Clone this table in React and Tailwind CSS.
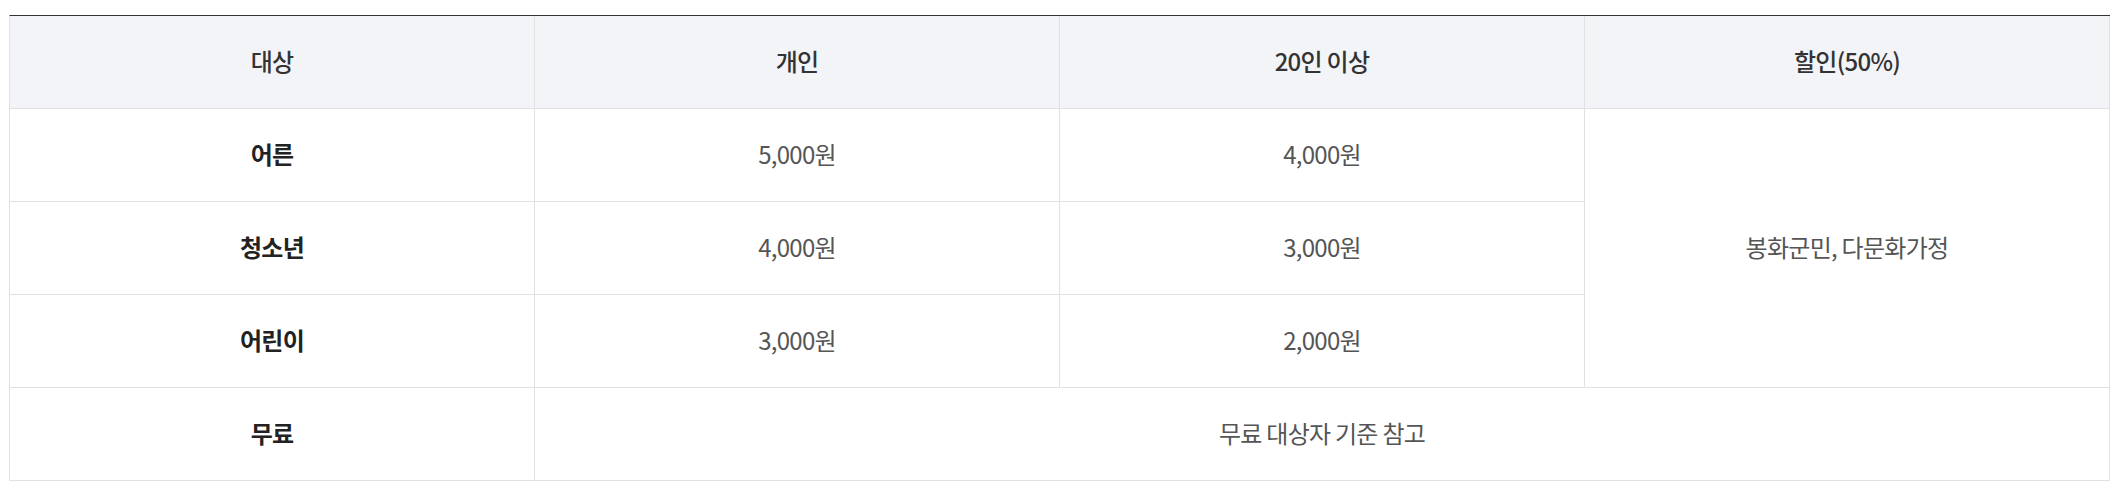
export default function App() {
  const font = { fontFamily: '"Noto Sans CJK KR", "Noto Sans", sans-serif' };
  const cell = "flex items-center justify-center border-r border-b border-[#e1e1e1] h-[93px] pb-[3px]";
  const head = `${cell} bg-[#f3f4f8] text-[#333] font-medium`;
  const label = `${cell} text-[#222] font-bold`;
  const val = `${cell} text-[#555]`;
  return (
    <div className="bg-white w-[2123px] h-[493px] pt-[15px] pl-[9px]" style={font}>
      <div className="w-[2101px] grid grid-cols-4 border-l border-t border-l-[#e1e1e1] border-t-[#333] text-[24px] tracking-[-0.03em]">
        <div className={head}>대상</div>
        <div className={head}>개인</div>
        <div className={head}>20인 이상</div>
        <div className={head}>할인(50%)</div>

        <div className={label}>어른</div>
        <div className={val}>5,000원</div>
        <div className={val}>4,000원</div>
        <div className={`${val} row-span-3 h-auto`}>봉화군민, 다문화가정</div>

        <div className={label}>청소년</div>
        <div className={val}>4,000원</div>
        <div className={val}>3,000원</div>

        <div className={label}>어린이</div>
        <div className={val}>3,000원</div>
        <div className={val}>2,000원</div>

        <div className={label}>무료</div>
        <div className={`${val} col-span-3`}>무료 대상자 기준 참고</div>
      </div>
    </div>
  );
}
